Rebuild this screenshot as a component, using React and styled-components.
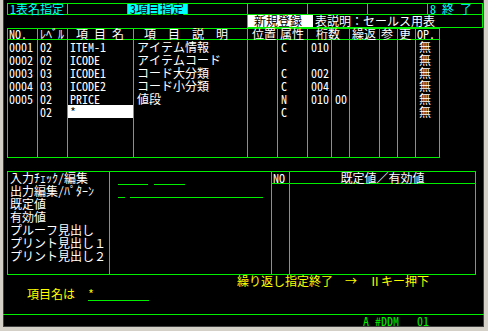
import React from 'react';
import styled, { createGlobalStyle } from 'styled-components';

const GREEN = '#00f000';
const CYAN = '#00ffff';
const YELLOW = '#ffff00';

const GlobalStyle = createGlobalStyle`
  html, body {
    margin: 0;
    padding: 0;
    background: #d4d0c8;
  }
  body {
    font-family: "Noto Sans Mono CJK JP", "Liberation Mono", "Noto Sans CJK JP", monospace;
    font-size: 12px;
    overflow: hidden;
  }
`;

// -- Frame
const Frame = styled.div`
  width: 488px;
  height: 331px;
  padding-left: 3px;
  box-sizing: border-box;
  background: #d4d0c8;
`;

const Screen = styled.div`
  width: 481px;
  height: 327px;
  box-sizing: border-box;
  background: #000;
  border: 1px solid #404040;
  border-top: 0;
  display: flex;
  flex-direction: column;
  color: #fff;
  white-space: pre;
`;

// -- Top menu
const MenuBar = styled.div`
  margin: 3px 0 0 3px;
  width: 476px;
  box-sizing: border-box;
  display: grid;
  grid-template-columns: repeat(7, 59px) 54px;
  gap: 1px;
  padding: 1px;
  background: ${GREEN};
`;

const MenuCell = styled.div`
  height: 10px;
  line-height: 10px;
  padding-left: 2px;
  background: ${(p) => (p.$active ? CYAN : '#000')};
  color: ${(p) => (p.$active ? '#000' : CYAN)};
`;

const TitleBar = styled.div`
  margin-left: 243px;
  width: 236px;
  box-sizing: border-box;
  display: grid;
  grid-template-columns: 65px 1fr;
  padding: 0 1px 1px 1px;
  background: ${GREEN};
`;

const TitleCell = styled.div`
  height: 12px;
  line-height: 12px;
  padding-left: ${(p) => (p.$white ? 6 : 2)}px;
  background: ${(p) => (p.$white ? '#fff' : '#000')};
  color: ${(p) => (p.$white ? '#000' : '#fff')};
`;

// -- Item table
const COLS = '29px 29px 65px 113px 29px 29px 23px 17px 29px 17px 17px 23px';

const Table = styled.div`
  margin-left: 3px;
  width: 433px;
  box-sizing: border-box;
  display: flex;
  flex-direction: column;
  gap: 1px;
  padding: 1px;
  background: ${GREEN};
`;

const HeadRow = styled.div`
  display: grid;
  grid-template-columns: ${COLS};
  column-gap: 1px;
`;

const HeadCell = styled.div`
  grid-column: span ${(p) => p.$span || 1};
  height: 10px;
  line-height: 10px;
  padding-left: ${(p) => p.$pad}px;
  background: #000;
`;

const Body = styled.div`
  display: grid;
  grid-template-columns: ${COLS};
  grid-auto-rows: 13px;
  column-gap: 1px;
`;

const Cell = styled.div`
  line-height: 13px;
  padding-left: ${(p) => p.$pad}px;
  background: ${(p) => (p.$hl ? '#fff' : '#000')};
  color: ${(p) => (p.$hl ? '#000' : '#fff')};
  overflow: hidden;
`;

// -- Detail panel
const Detail = styled.div`
  margin: 13px 0 0 3px;
  width: 469px;
  height: 104px;
  box-sizing: border-box;
  display: grid;
  grid-template-columns: 101px 161px 203px;
  gap: 1px;
  padding: 1px;
  background: ${GREEN};
`;

const Labels = styled.div`
  background: #000;
  padding-left: 2px;
  display: flex;
  flex-direction: column;
`;

const Label = styled.div`
  height: 13px;
  line-height: 12px;
`;

const Fields = styled.div`
  background: #000;
  display: flex;
  flex-direction: column;
`;

const FieldRow = styled.div`
  height: 13px;
  display: flex;
  gap: ${(p) => p.$gap}px;
  padding-left: 8px;
`;

const Underline = styled.div`
  width: ${(p) => p.$w}px;
  height: 13px;
  box-sizing: border-box;
  border-bottom: 1px solid ${GREEN};
`;

const ValuePanel = styled.div`
  display: grid;
  grid-template-columns: 17px 185px;
  grid-template-rows: 11px 1fr;
  gap: 1px;
`;

const ValueHead = styled.div`
  background: #000;
  line-height: 11px;
  text-align: ${(p) => (p.$center ? 'center' : 'left')};
  padding-left: ${(p) => (p.$center ? 0 : 1)}px;
`;

const ValueBody = styled.div`
  background: #000;
`;

// -- Messages and status
const Messages = styled.div`
  height: 39px;
  color: ${YELLOW};
  display: flex;
  flex-direction: column;
`;

const Notice = styled.div`
  height: 13px;
  line-height: 12px;
  padding-left: 233px;
`;

const Prompt = styled.div`
  height: 13px;
  display: flex;
  padding-left: 23px;
  line-height: 12px;
`;

const PromptInput = styled.div`
  width: 61px;
  height: 13px;
  margin-left: 13px;
  box-sizing: border-box;
  border-bottom: 1px solid ${GREEN};
`;

const Divider = styled.div`
  height: 1px;
  margin: 0 -1px;
  background: ${GREEN};
`;

const Status = styled.div`
  height: 11px;
  line-height: 11px;
  padding-left: 359px;
  color: ${GREEN};
`;
//---------------------------------------

const menu = ['1表名指定', '', '3項目指定', '', '', '', '', '8 終 了'];

const heads = [
  { t: 'NO.', pad: 1 },
  { t: 'ﾚﾍﾞﾙ', pad: 2 },
  { t: '項 目 名', pad: 8 },
  { t: '項　目　説　明', pad: 10 },
  { t: '位置', pad: 4 },
  { t: '属性', pad: 2 },
  { t: '桁数', pad: 8, span: 2 },
  { t: '繰返', pad: 2 },
  { t: '参', pad: 1 },
  { t: '更', pad: 1 },
  { t: 'OP.', pad: 1 },
];

const pads = [1, 2, 2, 3, 3, 3, 3, 3, 2, 2, 2, 3];

const rows = [
  ['0001', '02', 'ITEM-1', 'アイテム情報', '', 'C', '010', '', '', '', '', '無'],
  ['0002', '02', 'ICODE', 'アイテムコード', '', '', '', '', '', '', '', '無'],
  ['0003', '03', 'ICODE1', 'コード大分類', '', 'C', '002', '', '', '', '', '無'],
  ['0004', '03', 'ICODE2', 'コード小分類', '', 'C', '004', '', '', '', '', '無'],
  ['0005', '02', 'PRICE', '値段', '', 'N', '010', '00', '', '', '', '無'],
  ['', '02', '*', '', '', 'C', '', '', '', '', '', '無'],
  ['', '', '', '', '', '', '', '', '', '', '', ''],
  ['', '', '', '', '', '', '', '', '', '', '', ''],
  ['', '', '', '', '', '', '', '', '', '', '', ''],
];

const labels = [
  '入力ﾁｪｯｸ/編集',
  '出力編集/ﾊﾟﾀｰﾝ',
  '既定値',
  '有効値',
  'プルーフ見出し',
  'プリント見出し１',
  'プリント見出し２',
];

const App = () => {
  return (
    <>
      <GlobalStyle />
      <Frame>
        <Screen>
          <MenuBar>
            {menu.map((m, i) => (
              <MenuCell key={i} $active={i === 2}>
                {m}
              </MenuCell>
            ))}
          </MenuBar>
          <TitleBar>
            <TitleCell $white>新規登録</TitleCell>
            <TitleCell>表説明：セールス用表</TitleCell>
          </TitleBar>

          <Table>
            <HeadRow>
              {heads.map((h) => (
                <HeadCell key={h.t} $pad={h.pad} $span={h.span}>
                  {h.t}
                </HeadCell>
              ))}
            </HeadRow>
            <Body>
              {rows.map((r, ri) =>
                r.map((v, ci) => (
                  <Cell key={`${ri}-${ci}`} $pad={pads[ci]} $hl={ri === 5 && ci === 2}>
                    {v}
                  </Cell>
                ))
              )}
            </Body>
          </Table>

          <Detail>
            <Labels>
              {labels.map((l) => (
                <Label key={l}>{l}</Label>
              ))}
            </Labels>
            <Fields>
              <FieldRow $gap={6}>
                <Underline $w={30} />
                <Underline $w={31} />
              </FieldRow>
              <FieldRow $gap={5}>
                <Underline $w={7} />
                <Underline $w={133} />
              </FieldRow>
            </Fields>
            <ValuePanel>
              <ValueHead>NO</ValueHead>
              <ValueHead $center>既定値／有効値</ValueHead>
              <ValueBody />
              <ValueBody />
            </ValuePanel>
          </Detail>

          <Messages>
            <Notice>繰り返し指定終了　→　Ⅱキー押下</Notice>
            <Prompt>
              項目名は
              <PromptInput>*</PromptInput>
            </Prompt>
          </Messages>
          <Divider />
          <Status>A #DDM   01</Status>
        </Screen>
      </Frame>
    </>
  );
};

export default App;
